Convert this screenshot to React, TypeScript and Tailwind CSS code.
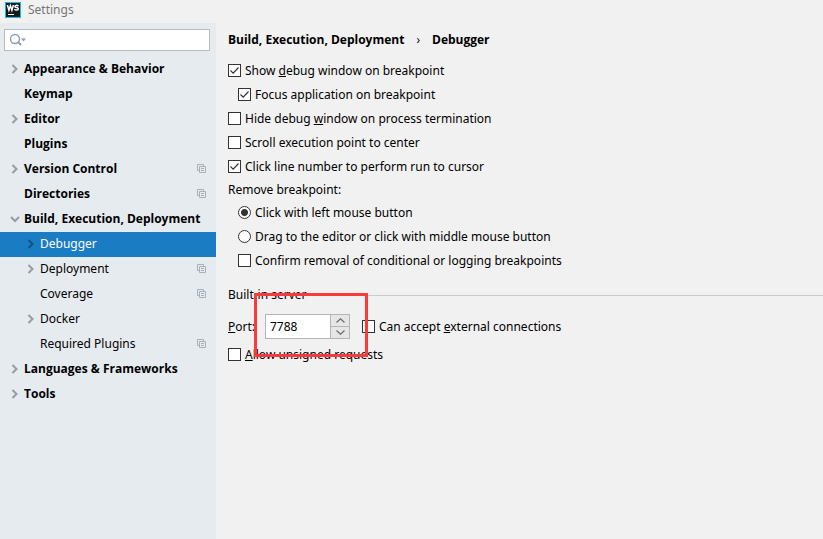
import { useState } from "react";
import type { ReactNode } from "react";

type Item = {
  label: string;
  level: 0 | 1;
  arrow?: "right" | "down";
  copy?: boolean;
};

const items: Item[] = [
  { label: "Appearance & Behavior", level: 0, arrow: "right" },
  { label: "Keymap", level: 0 },
  { label: "Editor", level: 0, arrow: "right" },
  { label: "Plugins", level: 0 },
  { label: "Version Control", level: 0, arrow: "right", copy: true },
  { label: "Directories", level: 0, copy: true },
  { label: "Build, Execution, Deployment", level: 0, arrow: "down" },
  { label: "Debugger", level: 1, arrow: "right" },
  { label: "Deployment", level: 1, arrow: "right", copy: true },
  { label: "Coverage", level: 1, copy: true },
  { label: "Docker", level: 1, arrow: "right" },
  { label: "Required Plugins", level: 1, copy: true },
  { label: "Languages & Frameworks", level: 0, arrow: "right" },
  { label: "Tools", level: 0, arrow: "right" },
];

function Arrow({ dir, selected }: { dir?: "right" | "down"; selected: boolean }) {
  return (
    <svg
      viewBox="0 0 10 10"
      className={`size-[10px] shrink-0 ${selected ? "text-[#12517f]" : "text-[#999b9d]"}`}
      fill="none"
      stroke="currentColor"
      strokeWidth="2"
    >
      {dir === "right" && <path d="M2.5 1 L6.5 5 L2.5 9" />}
      {dir === "down" && <path d="M1 3 L5 7 L9 3" />}
    </svg>
  );
}

function CopyIcon() {
  return (
    <svg viewBox="0 0 9 9" className="size-[9px] shrink-0" fill="none" stroke="#a9b1b8">
      <path d="M2 6.5H0.5V0.5H6.5V2" />
      <path d="M2.5 2.5h6v6h-6z" />
      <path d="M4 4.5h3M4 6.5h3" />
    </svg>
  );
}

function Logo() {
  return (
    <svg viewBox="0 0 16 16" className="size-4 shrink-0">
      <rect width="16" height="16" fill="#12c0ee" />
      <rect x="1" y="1" width="14" height="14" fill="#16191b" />
      <path
        d="M2.4 3 L3.9 8.2 L5.4 3.6 L6.9 8.2 L8.4 3"
        fill="none"
        stroke="#fff"
        strokeWidth="1.5"
      />
      <path
        d="M13.4 4.2 C12.4 3 9.9 3.1 9.9 4.5 C9.9 6 13.3 5.2 13.3 6.8 C13.3 8.5 10.4 8.4 9.4 7.2"
        fill="none"
        stroke="#fff"
        strokeWidth="1.5"
      />
      <rect x="3" y="12" width="6" height="1" fill="#fff" />
    </svg>
  );
}

function Check({
  id,
  children,
  checked = false,
}: {
  id: string;
  children: ReactNode;
  checked?: boolean;
}) {
  const [on, setOn] = useState(checked);
  return (
    <div className="flex h-6 items-start gap-1">
      <span className="relative mt-[5px] size-[13px] shrink-0">
        <input
          id={id}
          type="checkbox"
          checked={on}
          onChange={(e) => setOn(e.target.checked)}
          className="block size-[13px] appearance-none border border-[#333] bg-white"
        />
        {on && (
          <svg
            viewBox="0 0 13 13"
            className="pointer-events-none absolute inset-0 size-[13px]"
            fill="none"
            stroke="#333"
            strokeWidth="1.2"
          >
            <path d="M2.5 6.5 L5.2 9.2 L10.5 3.5" />
          </svg>
        )}
      </span>
      <label htmlFor={id} className="whitespace-nowrap">
        {children}
      </label>
    </div>
  );
}

function Radio({
  id,
  children,
  checked = false,
}: {
  id: string;
  children: ReactNode;
  checked?: boolean;
}) {
  return (
    <div className="flex h-6 items-start gap-1">
      <input
        id={id}
        type="radio"
        name="remove"
        defaultChecked={checked}
        className="mt-[5px] size-[13px] shrink-0 appearance-none rounded-full border border-[#333] bg-white checked:bg-[radial-gradient(circle,#333_3px,#fff_4px)]"
      />
      <label htmlFor={id} className="whitespace-nowrap">
        {children}
      </label>
    </div>
  );
}

export default function App() {
  const [port, setPort] = useState(7788);

  return (
    <div className="flex min-h-screen flex-col bg-[#f1f1f1] font-['Noto_Sans',sans-serif] text-[12px] leading-6 text-black">
      <header className="flex h-[23px] items-start gap-[7px] pl-[5px] text-[#757575]">
        <span className="pt-[2px]">
          <Logo />
        </span>
        <span className="leading-5">Settings</span>
      </header>

      <div className="flex grow">
        <aside className="w-[216px] shrink-0 bg-[#e6ebef] pt-[6px]">
          <div className="mx-1 mr-[6px] flex h-[22px] items-center border border-[#b9bcbf] bg-white pl-1">
            <svg viewBox="0 0 18 14" className="h-[14px] w-[18px] shrink-0" fill="none">
              <circle cx="6" cy="6" r="4.5" stroke="#8f9ba5" strokeWidth="1.4" />
              <path d="M9.2 9.2 L12 12" stroke="#8f9ba5" strokeWidth="1.8" />
              <path d="M12 5.5h5l-2.5 3z" fill="#8f9ba5" />
            </svg>
            <input
              type="text"
              aria-label="Search settings"
              className="h-full w-full min-w-0 bg-transparent outline-none"
            />
          </div>

          <nav className="mt-[6px]">
            {items.map((item) => {
              const selected = item.label === "Debugger";
              return (
                <a
                  key={item.label}
                  href="#"
                  className={`flex h-[25px] items-center gap-1 pr-[10px] pb-[2px] ${
                    item.level === 0
                      ? "pl-[10px] font-['Open_Sans',sans-serif] font-bold"
                      : "pl-[26px]"
                  } ${selected ? "bg-[#1a7dc4] text-white" : ""}`}
                >
                  <Arrow dir={item.arrow} selected={selected} />
                  <span className="grow whitespace-nowrap">{item.label}</span>
                  {item.copy && <CopyIcon />}
                </a>
              );
            })}
          </nav>
        </aside>

        <main className="min-w-0 grow pt-[5px] pl-3">
          <h1 className="mb-[7px] flex gap-3 font-['Open_Sans',sans-serif] font-bold">
            <span>Build, Execution, Deployment</span>
            <span className="font-normal">›</span>
            <span>Debugger</span>
          </h1>

          <Check id="show" checked>
            Show <u>d</u>ebug window on breakpoint
          </Check>
          <div className="pl-[10px]">
            <Check id="focus" checked>
              Focus application on breakpoint
            </Check>
          </div>
          <Check id="hide">
            Hide debug <u>w</u>indow on process termination
          </Check>
          <Check id="scroll">Scroll execution point to center</Check>
          <Check id="line" checked>
            Click line number to perform run to cursor
          </Check>

          <div role="radiogroup" aria-labelledby="remove-label">
            <div id="remove-label" className="h-[22px] leading-[22px]">
              Remove breakpoint:
            </div>
            <div className="pl-[10px]">
              <Radio id="left" checked>
                Click with left mouse button
              </Radio>
              <Radio id="middle">
                Drag to the editor or click with middle mouse button
              </Radio>
              <Check id="confirm">
                Confirm removal of conditional or logging breakpoints
              </Check>
            </div>
          </div>

          <section className="relative mt-[10px]">
            <div className="flex items-center gap-2">
              <h2>Built-in server</h2>
              <div className="h-px grow bg-[#cbcbcb]" />
            </div>

            <div className="mt-[7px] flex h-[25px]">
              <label htmlFor="port" className="w-[37px] pt-px">
                <u>P</u>ort:
              </label>
              <div className="flex w-[85px] border border-[#b5b5b5] bg-white">
                <input
                  id="port"
                  type="text"
                  value={port}
                  onChange={(e) => setPort(Number(e.target.value) || 0)}
                  className="w-16 min-w-0 bg-transparent pl-1 outline-none"
                />
                <div className="flex grow flex-col border-l border-[#b5b5b5] bg-[#e6e6e6]">
                  <button
                    type="button"
                    aria-label="Increase port"
                    onClick={() => setPort(port + 1)}
                    className="flex h-3 items-center justify-center border-b border-[#b5b5b5]"
                  >
                    <svg viewBox="0 0 9 5" className="h-[5px] w-[9px]" fill="none" stroke="#707070" strokeWidth="1.3">
                      <path d="M0.5 4.5 L4.5 0.8 L8.5 4.5" />
                    </svg>
                  </button>
                  <button
                    type="button"
                    aria-label="Decrease port"
                    onClick={() => setPort(port - 1)}
                    className="flex h-[11px] items-center justify-center"
                  >
                    <svg viewBox="0 0 9 5" className="h-[5px] w-[9px]" fill="none" stroke="#707070" strokeWidth="1.3">
                      <path d="M0.5 0.5 L4.5 4.2 L8.5 0.5" />
                    </svg>
                  </button>
                </div>
              </div>
              <div className="ml-3 pt-px">
                <Check id="external">
                  Can accept <u>e</u>xternal connections
                </Check>
              </div>
            </div>

            <div className="mt-1">
              <Check id="unsigned">
                <u>A</u>llow unsigned requests
              </Check>
            </div>

            {/* highlight around the port field */}
            <div className="pointer-events-none absolute top-[10px] left-[26px] h-16 w-[114px] border-3 border-[#fb3b3b]" />
          </section>
        </main>
      </div>
    </div>
  );
}
